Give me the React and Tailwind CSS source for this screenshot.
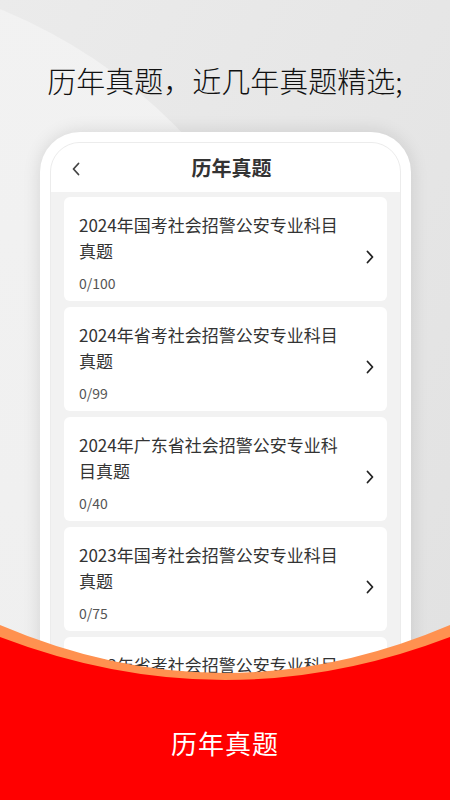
import React from "react";

const papers = [
  { title: "2024年国考社会招警公安专业科目真题", count: "0/100" },
  { title: "2024年省考社会招警公安专业科目真题", count: "0/99" },
  { title: "2024年广东省社会招警公安专业科目真题", count: "0/40" },
  { title: "2023年国考社会招警公安专业科目真题", count: "0/75" },
  { title: "2023年省考社会招警公安专业科目真题", count: "0/80" },
];

const font = { fontFamily: '"Noto Sans CJK SC", "Noto Sans", sans-serif' };

const ChevronRight = () => (
  <svg width="10" height="16" viewBox="0 0 10 16" fill="none">
    <path d="M2.5 2.5L7.5 8L2.5 13.5" stroke="#222" strokeWidth="1.8" strokeLinecap="round" strokeLinejoin="round" />
  </svg>
);

const ChevronLeft = () => (
  <svg width="10" height="16" viewBox="0 0 10 16" fill="none">
    <path d="M7.5 2.5L2.5 8L7.5 13.5" stroke="#444" strokeWidth="1.8" strokeLinecap="round" strokeLinejoin="round" />
  </svg>
);

const PaperCard = ({ title, count }) => (
  <div className="flex items-center bg-white rounded-[6px] pl-[15px] pr-[12px] pt-[15px] pb-[8px]">
    <div className="flex-1 pr-[20px]">
      <div className="text-[17px] leading-[26px] text-[#333]">{title}</div>
      <div className="mt-[9px] text-[14px] leading-[20px] text-[#555]">{count}</div>
    </div>
    <div className="pt-[8px]">
      <ChevronRight />
    </div>
  </div>
);

export default function App() {
  return (
    <div className="relative w-[450px] h-[800px] overflow-hidden bg-gradient-to-br from-[#ebebeb] to-[#e1e1e1]" style={font}>
      {/* lighter sweep in the background */}
      <div className="absolute left-[-730px] top-[-30px] w-[1060px] h-[1060px] rounded-full bg-gradient-to-b from-[#f2f2f2] to-[#eeeeee]" />

      <div className="relative">
        <h1 className="pt-[60px] text-center text-[29px] leading-[40px] font-light text-[#111]">
          历年真题，近几年真题精选;
        </h1>

        {/* phone mockup */}
        <div className="mt-[32px] ml-[40px] w-[371px] h-[700px] bg-white rounded-[40px] p-[10px] shadow-[0_0_18px_rgba(0,0,0,0.12)]">
          <div className="h-full rounded-[30px] border border-[#ececec] overflow-hidden bg-[#f2f2f2]">
            <div className="h-[49px] bg-white grid grid-cols-[44px_1fr_44px] items-center">
              <div className="pl-[20px] pt-[2px]">
                <ChevronLeft />
              </div>
              <span className="pl-[12px] text-center text-[20px] font-bold text-[#333]">历年真题</span>
              <div />
            </div>
            <div className="flex flex-col gap-[6px] px-[13px] pt-[5px]">
              {papers.map((p, i) => (
                <PaperCard key={i} title={p.title} count={p.count} />
              ))}
            </div>
          </div>
        </div>
      </div>

      {/* red bottom banner */}
      <svg className="absolute left-0 top-0" width="450" height="800" viewBox="0 0 450 800">
        <path d="M0 625 Q225 721 450 625 L450 800 L0 800 Z" fill="#ff9150" />
        <path d="M0 637 Q225 723 450 637 L450 800 L0 800 Z" fill="#ff0000" />
      </svg>
      <div className="absolute left-0 right-0 top-[725px] text-center text-white text-[26px] leading-[36px] font-normal tracking-[1px]">
        历年真题
      </div>
    </div>
  );
}
